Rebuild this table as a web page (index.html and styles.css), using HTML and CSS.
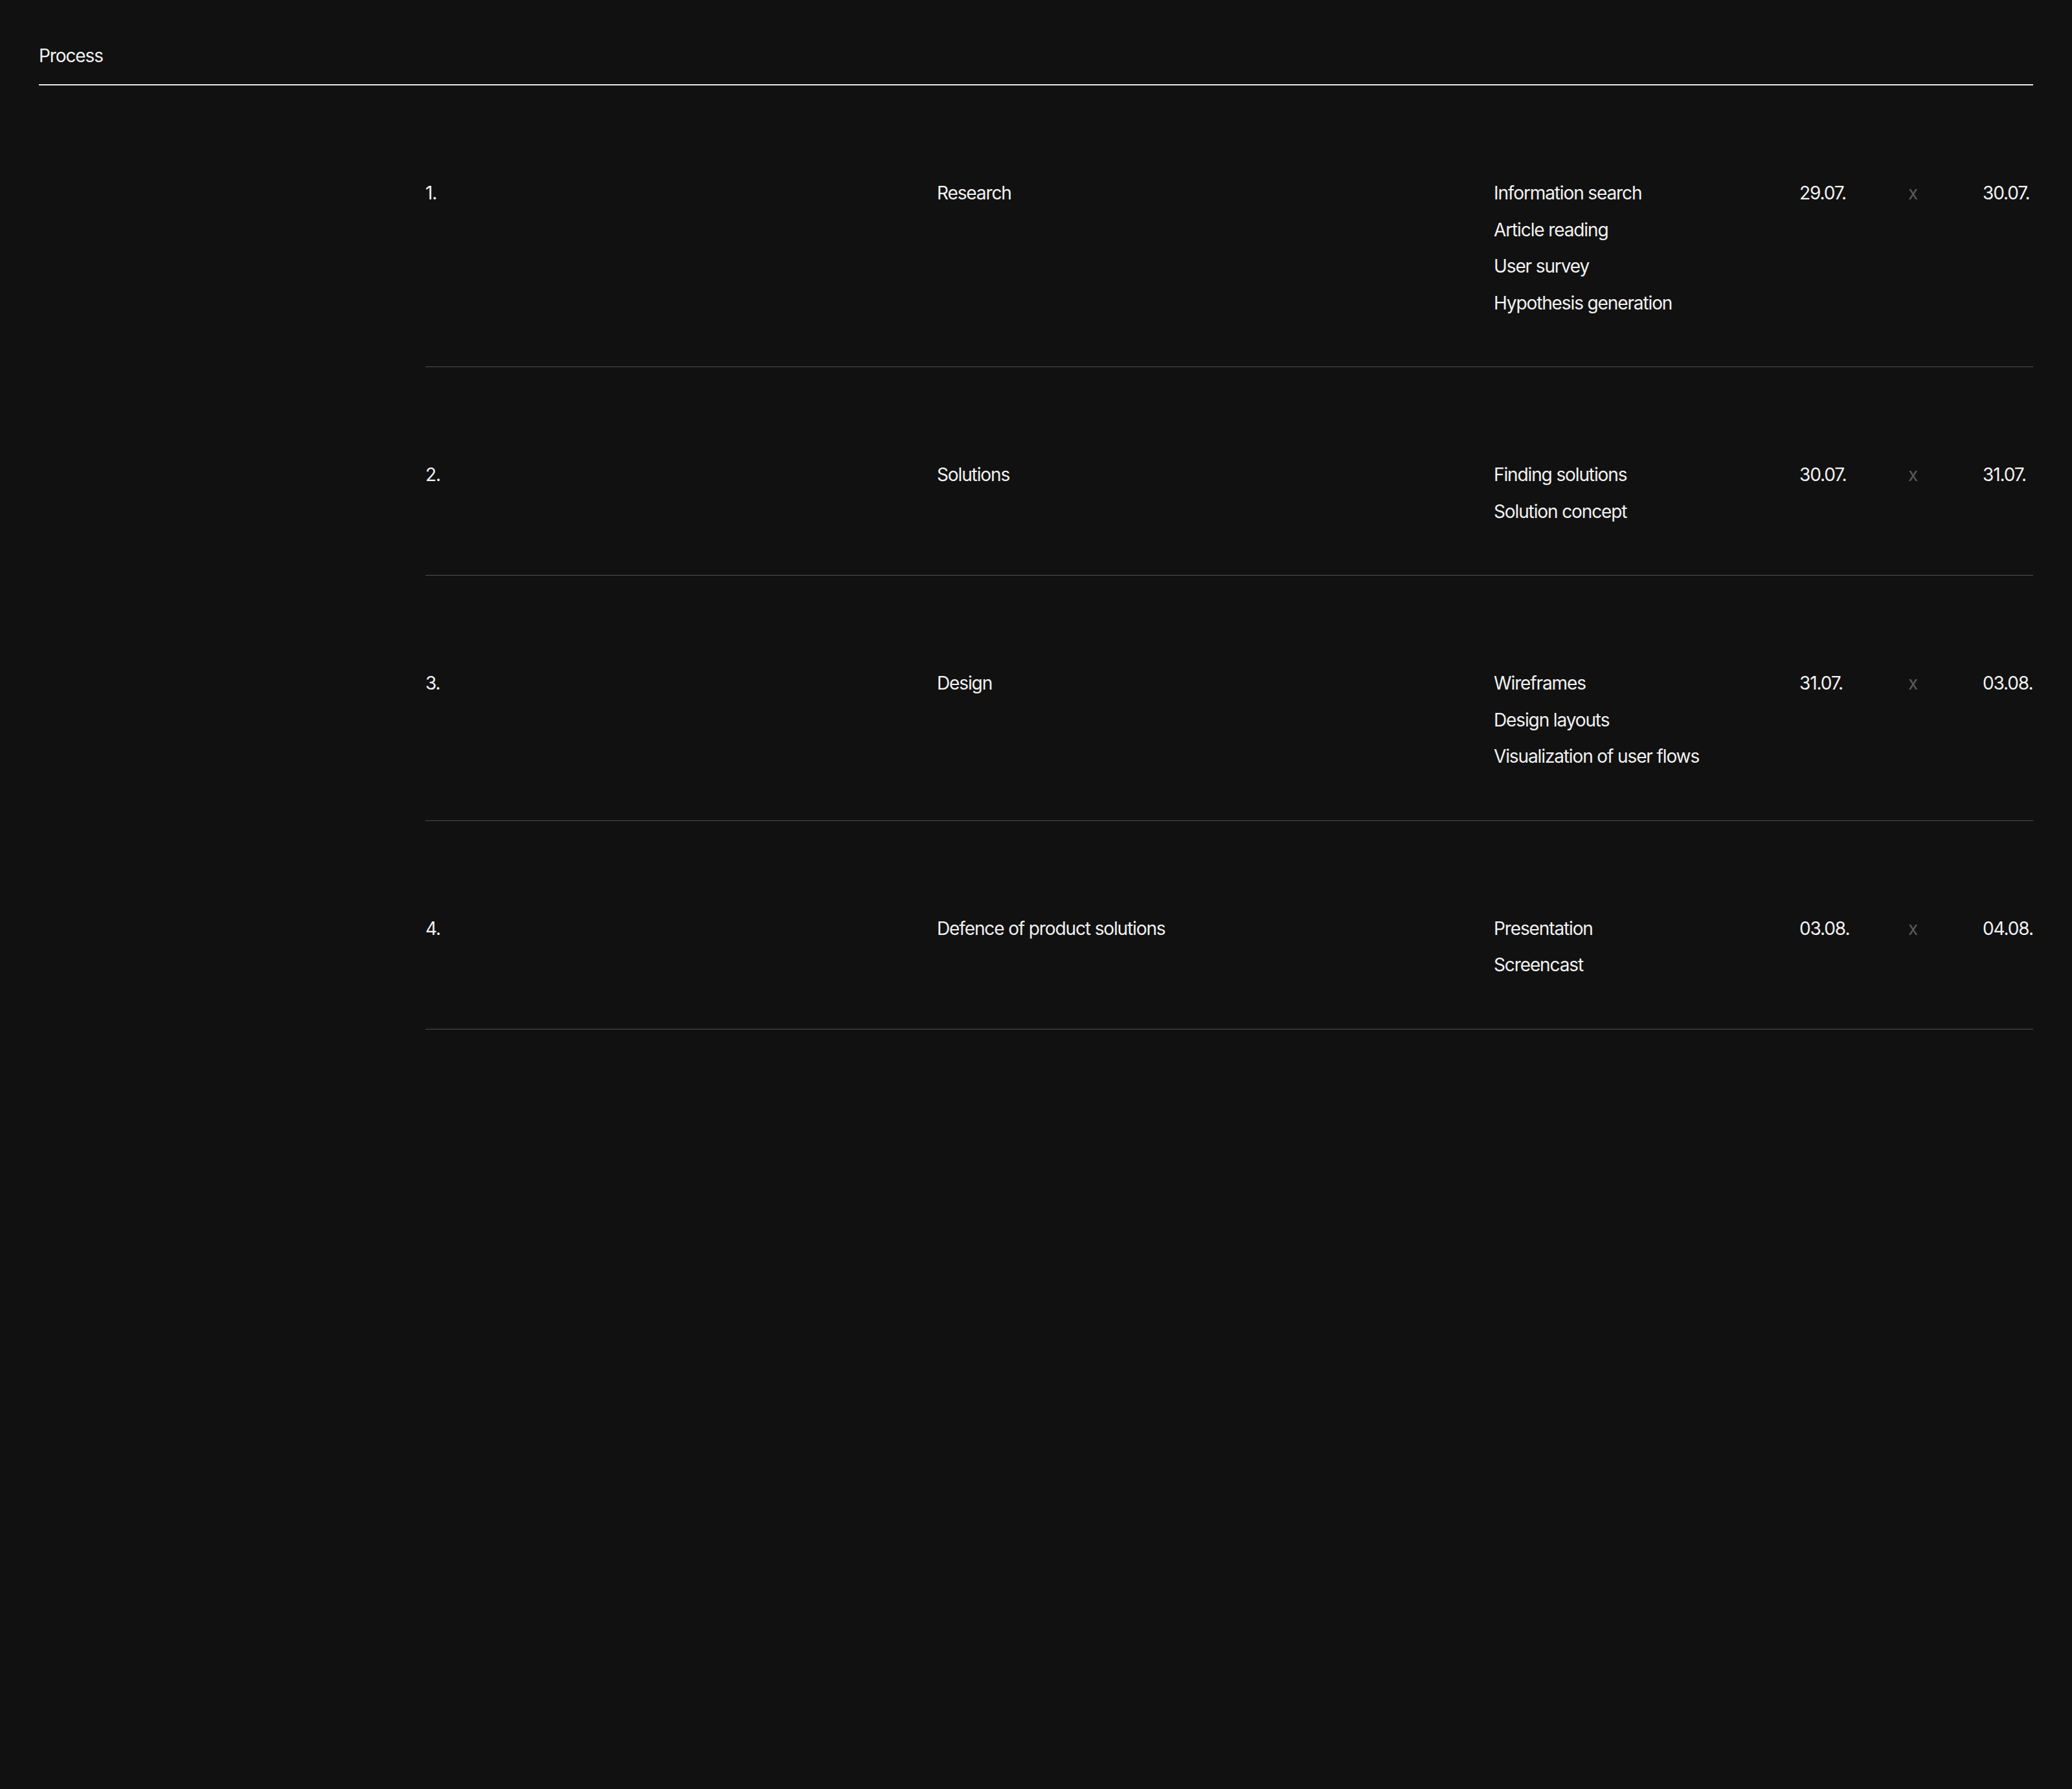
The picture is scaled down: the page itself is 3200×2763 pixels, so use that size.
FILE: index.html
```html
<!DOCTYPE html>
<html lang="en">
<head>
<meta charset="utf-8">
<title>Process</title>
<link rel="stylesheet" href="styles.css">
</head>
<body>
<main class="page">
  <header class="section-head">Process</header>
  <section class="steps">
    <div class="step">
      <div class="step-num">1.</div>
      <div class="step-title">Research</div>
      <ul class="step-tasks">
        <li>Information search</li>
        <li>Article reading</li>
        <li>User survey</li>
        <li>Hypothesis generation</li>
      </ul>
      <div class="step-date">29.07.</div>
      <div class="step-sep">x</div>
      <div class="step-date">30.07.</div>
    </div>
    <div class="step">
      <div class="step-num">2.</div>
      <div class="step-title">Solutions</div>
      <ul class="step-tasks">
        <li>Finding solutions</li>
        <li>Solution concept</li>
      </ul>
      <div class="step-date">30.07.</div>
      <div class="step-sep">x</div>
      <div class="step-date">31.07.</div>
    </div>
    <div class="step">
      <div class="step-num">3.</div>
      <div class="step-title">Design</div>
      <ul class="step-tasks">
        <li>Wireframes</li>
        <li>Design layouts</li>
        <li>Visualization of user flows</li>
      </ul>
      <div class="step-date">31.07.</div>
      <div class="step-sep">x</div>
      <div class="step-date">03.08.</div>
    </div>
    <div class="step">
      <div class="step-num">4.</div>
      <div class="step-title">Defence of product solutions</div>
      <ul class="step-tasks">
        <li>Presentation</li>
        <li>Screencast</li>
      </ul>
      <div class="step-date">03.08.</div>
      <div class="step-sep">x</div>
      <div class="step-date">04.08.</div>
    </div>
  </section>
</main>
</body>
</html>
```

FILE: styles.css
```css
html, body {
  margin: 0;
  padding: 0;
  background: #111111;
}

body {
  min-height: 2763px;
  color: #f2f2f2;
  font-family: Inter, "Noto Sans", "Liberation Sans", sans-serif;
  font-size: 28px;
  line-height: 56.5px;
  letter-spacing: -0.04em;
}

.page {
  padding: 0 60px;
}

.section-head {
  padding-top: 58px;
  padding-bottom: 16px;
  line-height: 56px;
  border-bottom: 2px solid #e8e8e8;
}

.steps {
  margin-left: 597px;
}

.step {
  display: grid;
  grid-template-columns: 790px 860px 472px 168px 115px 1fr;
  align-items: start;
  padding-top: 138px;
  padding-bottom: 70px;
  border-bottom: 1px solid #4f4f4f;
}

.step-tasks {
  list-style: none;
  margin: 0;
  padding: 0;
}

.step-sep {
  color: #5a5a5a;
  letter-spacing: 0;
}
```
